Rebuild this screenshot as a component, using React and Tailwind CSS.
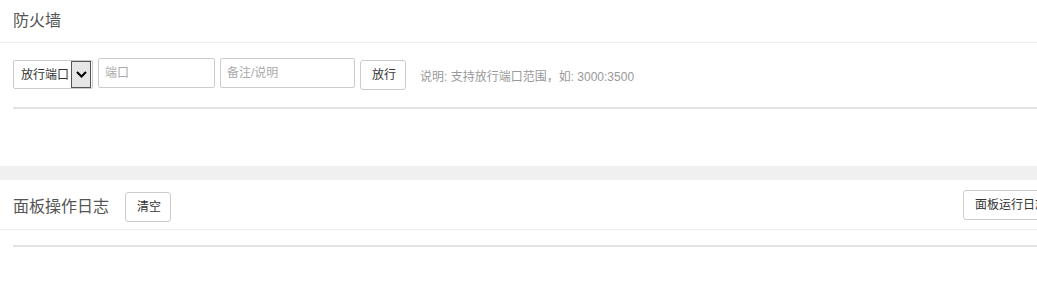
import React, { useState } from 'react';

const font = "font-['Liberation_Sans','Noto_Sans_CJK_SC',sans-serif]";

const Btn = ({ children, className = '' }) => (
  <button className={`h-[30px] px-[11px] border border-[#ccc] rounded-[3px] bg-white text-[12px] text-[#333] leading-none whitespace-nowrap ${className}`}>
    {children}
  </button>
);

const App = () => {
  const [port, setPort] = useState('');
  const [note, setNote] = useState('');

  return (
    <div className={`w-[1037px] h-[296px] overflow-hidden bg-white ${font}`}>
      <div className="w-[1072px]">
        {/* Firewall */}
        <div className="h-[43px] border-b border-[#eee] px-[13px] flex items-center text-[16px] text-[#555]">
          防火墙
        </div>
        <div className="h-[123px] pl-[13px] pt-[15px]">
          <div className="flex items-start">
            <div className="mt-[2px] w-[80px] h-[29px] border border-[#ccc] rounded-[2px] flex items-center">
              <span className="pl-[7px] text-[12px] text-[#333] flex-1 whitespace-nowrap">放行端口</span>
              <span className="w-[20px] h-[27px] mr-[1px] bg-[#e6e6e6] border border-[#555] flex items-center justify-center">
                <svg width="11" height="7" viewBox="0 0 11 7">
                  <path d="M1 1l4.5 4.5L10 1" fill="none" stroke="#000" strokeWidth="2" />
                </svg>
              </span>
            </div>
            <input
              value={port}
              onChange={(e) => setPort(e.target.value)}
              placeholder="端口"
              className="ml-[5px] w-[117px] h-[30px] border border-[#ccc] rounded-[2px] px-[6px] text-[12px] outline-none placeholder:text-[#aaa]"
            />
            <input
              value={note}
              onChange={(e) => setNote(e.target.value)}
              placeholder="备注/说明"
              className="ml-[5px] w-[135px] h-[30px] border border-[#ccc] rounded-[2px] px-[6px] text-[12px] outline-none placeholder:text-[#aaa]"
            />
            <Btn className="ml-[5px] mt-[2px] h-[29px] w-[46px] px-0">放行</Btn>
            <span className="ml-[14px] mt-[10px] text-[12px] text-[#999] whitespace-nowrap">说明: 支持放行端口范围，如: 3000:3500</span>
          </div>
          <div className="mt-[17px] border-t-2 border-[#e2e2e2]" />
        </div>

        <div className="h-[14px] bg-[#f0f0f0]" />

        {/* Panel log */}
        <div className="h-[50px] border-b border-[#eee] px-[13px] pt-[10px] flex items-start">
          <span className="mt-[9px] text-[16px] text-[#555] leading-none whitespace-nowrap">面板操作日志</span>
          <Btn className="ml-[16px] mt-[2px] h-[29px] w-[46px] px-0">清空</Btn>
          <Btn className="ml-auto w-[96px] px-0">面板运行日志</Btn>
        </div>
        <div className="pl-[13px] pt-[15px]">
          <div className="border-t-2 border-[#e2e2e2]" />
        </div>
      </div>
    </div>
  );
};

export default App;
